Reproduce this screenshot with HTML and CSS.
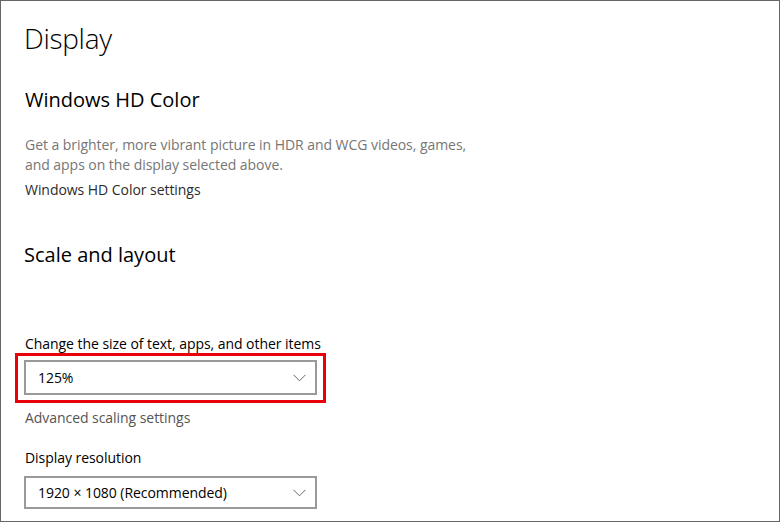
FILE: index.html
```html
<!DOCTYPE html>
<html>
<head>
<meta charset="utf-8">
<link rel="stylesheet" href="styles.css">
</head>
<body>
<div class="frame">
  <h1 class="page-title">Display</h1>
  <section class="group hd">
    <h2 class="group-title">Windows HD Color</h2>
    <p class="desc">Get a brighter, more vibrant picture in HDR and WCG videos, games,<br>and apps on the display selected above.</p>
    <div class="link">Windows HD Color settings</div>
  </section>
  <section class="group scale">
    <h2 class="group-title">Scale and layout</h2>
    <div class="label first-label">Change the size of text, apps, and other items</div>
    <div class="highlight">
      <div class="select">
        <span class="select-text">125%</span>
        <svg class="chev" width="13" height="8" viewBox="0 0 13 8"><path d="M0.5 0.8 L6.5 6.8 L12.5 0.8" fill="none" stroke="#666" stroke-width="1"/></svg>
      </div>
    </div>
    <div class="link gray">Advanced scaling settings</div>
    <div class="label res-label">Display resolution</div>
    <div class="select plain">
      <span class="select-text">1920 × 1080 (Recommended)</span>
      <svg class="chev" width="13" height="8" viewBox="0 0 13 8"><path d="M0.5 0.8 L6.5 6.8 L12.5 0.8" fill="none" stroke="#666" stroke-width="1"/></svg>
    </div>
  </section>
</div>
</body>
</html>
```
FILE: styles.css
```css
* { box-sizing: border-box; }
html, body { margin: 0; padding: 0; background: #fff; }
body { font-family: "Open Sans", "Noto Sans", sans-serif; color: #000; }
.frame {
  width: 780px;
  height: 522px;
  border: 1px solid #666;
  padding: 0 0 0 23px;
  overflow: hidden;
}
.page-title {
  font-weight: 300;
  font-size: 28px;
  line-height: 40px;
  margin: 17px 0 0 0;
  letter-spacing: -0.3px;
}
.group-title {
  font-weight: 400;
  font-size: 20px;
  line-height: 28px;
  margin: 0;
}
.hd { margin-top: 28px; }
.hd .group-title { margin-left: 1px; }
.desc {
  margin: 21px 0 0 1px;
  font-size: 14px;
  line-height: 20px;
  color: #767676;
  letter-spacing: -0.05px;
}
.link {
  font-size: 14px;
  line-height: 20px;
  color: #2b2b2b;
  margin: 5px 0 0 1px;
  letter-spacing: -0.05px;
}
.scale { margin-top: 41px; }
.label {
  font-size: 14px;
  line-height: 20px;
  color: #000;
  margin-left: 1px;
  letter-spacing: -0.05px;
}
.first-label { margin-top: 65px; }
.highlight {
  margin: -1px 0 0 -9px;
  width: 311px;
  border: 3px solid #e8000b;
  padding: 4px 6px 5px 6px;
}
.select {
  width: 293px;
  height: 35px;
  border: 2px solid #999;
  display: flex;
  align-items: center;
  justify-content: space-between;
  padding: 0 9px 0 12px;
  font-size: 14px;
  letter-spacing: -0.05px;
}
.select.plain { height: 33px; margin-top: 8px; }
.chev { display: block; }
.gray { color: #555; margin-top: 5px; }
.res-label { margin-top: 20px; }
```
